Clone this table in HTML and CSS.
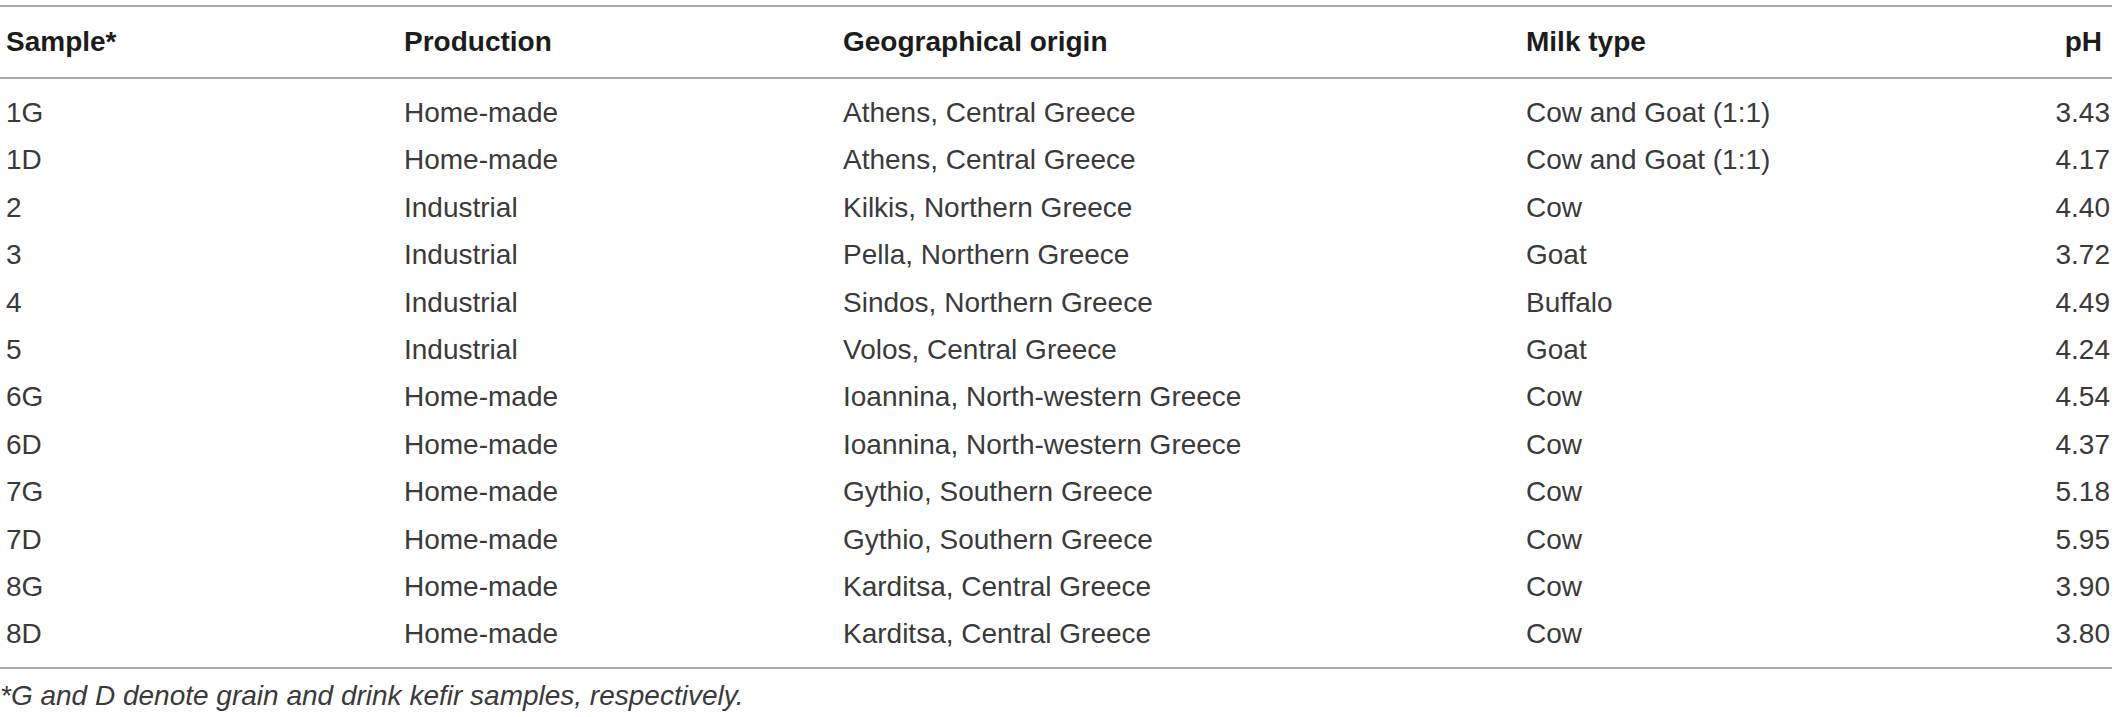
FILE: index.html
```html
<!DOCTYPE html>
<html lang="en">
<head>
<meta charset="utf-8">
<title>Kefir samples</title>
<link rel="stylesheet" href="styles.css">
</head>
<body>
<div class="wrap">
<table class="tbl">
  <colgroup>
    <col class="c1"><col class="c2"><col class="c3"><col class="c4"><col class="c5">
  </colgroup>
  <thead>
    <tr><th>Sample*</th><th>Production</th><th>Geographical origin</th><th>Milk type</th><th class="num">pH</th></tr>
  </thead>
  <tbody>
    <tr><td>1G</td><td>Home-made</td><td>Athens, Central Greece</td><td>Cow and Goat (1:1)</td><td class="num">3.43</td></tr>
    <tr><td>1D</td><td>Home-made</td><td>Athens, Central Greece</td><td>Cow and Goat (1:1)</td><td class="num">4.17</td></tr>
    <tr><td>2</td><td>Industrial</td><td>Kilkis, Northern Greece</td><td>Cow</td><td class="num">4.40</td></tr>
    <tr><td>3</td><td>Industrial</td><td>Pella, Northern Greece</td><td>Goat</td><td class="num">3.72</td></tr>
    <tr><td>4</td><td>Industrial</td><td>Sindos, Northern Greece</td><td>Buffalo</td><td class="num">4.49</td></tr>
    <tr><td>5</td><td>Industrial</td><td>Volos, Central Greece</td><td>Goat</td><td class="num">4.24</td></tr>
    <tr><td>6G</td><td>Home-made</td><td>Ioannina, North-western Greece</td><td>Cow</td><td class="num">4.54</td></tr>
    <tr><td>6D</td><td>Home-made</td><td>Ioannina, North-western Greece</td><td>Cow</td><td class="num">4.37</td></tr>
    <tr><td>7G</td><td>Home-made</td><td>Gythio, Southern Greece</td><td>Cow</td><td class="num">5.18</td></tr>
    <tr><td>7D</td><td>Home-made</td><td>Gythio, Southern Greece</td><td>Cow</td><td class="num">5.95</td></tr>
    <tr><td>8G</td><td>Home-made</td><td>Karditsa, Central Greece</td><td>Cow</td><td class="num">3.90</td></tr>
    <tr><td>8D</td><td>Home-made</td><td>Karditsa, Central Greece</td><td>Cow</td><td class="num">3.80</td></tr>
  </tbody>
</table>
<p class="note">*G and D denote grain and drink kefir samples, respectively.</p>
</div>
</body>
</html>
```
FILE: styles.css
```css
html, body {
  margin: 0;
  padding: 0;
  background: #ffffff;
}
.wrap {
  padding-top: 5px;
  width: 2112px;
  font-family: "Liberation Sans", Arial, sans-serif;
  font-size: 28px;
}
.tbl {
  width: 2112px;
  border-collapse: collapse;
  table-layout: fixed;
  border-top: 2px solid #a8a8a8;
  border-bottom: 2px solid #a8a8a8;
}
.c1 { width: 398px; }
.c2 { width: 439px; }
.c3 { width: 683px; }
.c4 { width: 280px; }
.c5 { width: 312px; }
.tbl th {
  text-align: left;
  font-weight: 700;
  color: #1c1c1c;
  line-height: 34px;
  padding: 18px 0 18px 6px;
  border-bottom: 2px solid #a8a8a8;
  white-space: nowrap;
}
.tbl td {
  text-align: left;
  font-weight: 400;
  color: #3a3a3a;
  line-height: 47.4px;
  padding: 0 0 0 6px;
  white-space: nowrap;
}
.tbl tbody tr:first-child td { padding-top: 10px; }
.tbl tbody tr:last-child td { padding-bottom: 9px; }
.tbl th.num { text-align: right; padding-right: 10px; }
.tbl td.num { text-align: right; padding-right: 2px; }
.note {
  margin: 0;
  padding-top: 10px;
  font-style: italic;
  color: #3a3a3a;
  line-height: 34px;
}
```
